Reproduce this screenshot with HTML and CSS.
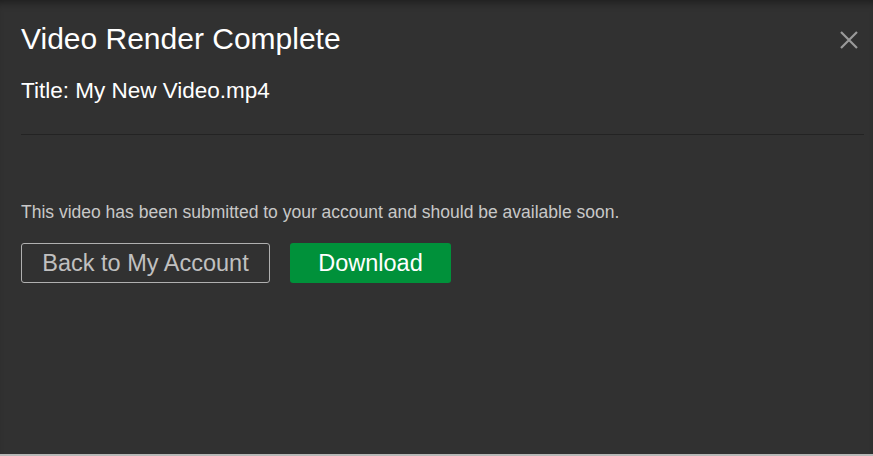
FILE: index.html
```html
<!DOCTYPE html>
<html>
<head>
<meta charset="utf-8">
<link rel="stylesheet" href="styles.css">
</head>
<body>
<div class="modal">
  <div class="header">
    <div class="titles">
      <h1 class="title">Video Render Complete</h1>
      <div class="subtitle">Title: My New Video.mp4</div>
    </div>
    <button class="close" aria-label="Close">
      <svg width="18" height="18" viewBox="0 0 18 18"><path d="M1 1L17 17M17 1L1 17" stroke="#9a9a9a" stroke-width="2.2"/></svg>
    </button>
  </div>
  <div class="body">
    <p class="message">This video has been submitted to your account and should be available soon.</p>
    <div class="actions">
      <button class="btn btn-outline">Back to My Account</button>
      <button class="btn btn-green">Download</button>
    </div>
  </div>
</div>
</body>
</html>
```
FILE: styles.css
```css
html, body {
  margin: 0;
  padding: 0;
  height: 100%;
  background: #313131;
}
body {
  font-family: "Liberation Sans", Arial, sans-serif;
  overflow: hidden;
}
.modal {
  height: 454px;
  background: #313131;
  border-bottom: 2px solid #b8b8b8;
  box-shadow: inset 0 8px 8px -6px rgba(0,0,0,0.45);
}
.header {
  display: flex;
  justify-content: space-between;
  align-items: flex-start;
  margin: 0 9px 0 21px;
  padding-top: 22px;
  border-bottom: 1px solid #232323;
  height: 135px;
  box-sizing: border-box;
}
.title {
  margin: 0;
  font-size: 30px;
  font-weight: normal;
  color: #ffffff;
  line-height: 34px;
}
.subtitle {
  margin-top: 22px;
  font-size: 22.5px;
  color: #ffffff;
  line-height: 26px;
}
.close {
  background: none;
  border: 0;
  padding: 0;
  margin-top: 9px;
  margin-right: 6px;
  width: 18px;
  height: 18px;
  cursor: pointer;
}
.close svg { display: block; }
.body {
  padding: 66px 21px 0;
}
.message {
  margin: 0;
  font-size: 17.5px;
  color: #c8c8c8;
  line-height: 22px;
}
.actions {
  display: flex;
  gap: 20px;
  margin-top: 20px;
}
.btn {
  font-family: "Liberation Sans", Arial, sans-serif;
  font-size: 23.5px;
  height: 40px;
  border-radius: 3px;
  padding: 0;
  cursor: pointer;
}
.btn-outline {
  width: 249px;
  background: transparent;
  border: 1px solid #b0b0b0;
  color: #c0c0c0;
}
.btn-green {
  width: 161px;
  background: #00913a;
  border: 0;
  color: #ffffff;
}
```
